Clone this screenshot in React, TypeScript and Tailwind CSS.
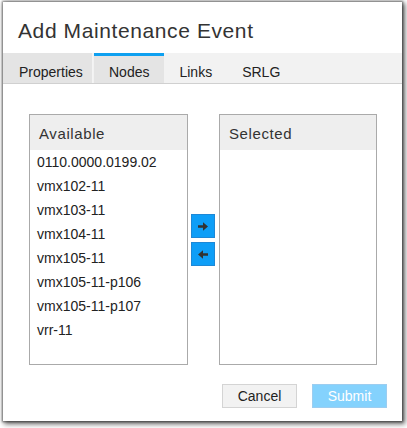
import React from "react";

const nodes = [
  "0110.0000.0199.02",
  "vmx102-11",
  "vmx103-11",
  "vmx104-11",
  "vmx105-11",
  "vmx105-11-p106",
  "vmx105-11-p107",
  "vrr-11",
];

const tabs = ["Properties", "Nodes", "Links", "SRLG"];

function ArrowRight() {
  return (
    <svg width="10" height="9" viewBox="0 0 10 9" fill="#333">
      <path d="M0 3.2h5V0.3L10 4.5 5 8.7V5.8H0z" />
    </svg>
  );
}

function ArrowLeft() {
  return (
    <svg width="10" height="9" viewBox="0 0 10 9" fill="#333">
      <path d="M10 3.2H5V0.3L0 4.5l5 4.2V5.8h5z" />
    </svg>
  );
}

export default function App() {
  return (
    <div className="w-[407px] h-[428px] bg-white pl-[3px] pt-[2px] font-[Liberation_Sans,Arial,sans-serif] text-[#222]">
      <div className="w-[399px] h-[419px] bg-white flex flex-col shadow-[0_0_2px_1px_rgba(0,0,0,0.45),2px_2px_5px_1px_rgba(0,0,0,0.6)]">
        {/* header */}
        <div className="h-[51px] pl-[15px] pt-[13px] text-[21px] tracking-[0.6px] text-[#333]">
          Add Maintenance Event
        </div>

        {/* tabs */}
        <div className="flex h-[31px] bg-[#f2f2f2] border-b border-[#d0d0d0]">
          {tabs.map((t) => {
            const active = t === "Nodes";
            const first = t === "Properties";
            return (
              <div
                key={t}
                className={
                  active
                    ? "px-[15px] pt-[6px] text-[14px] bg-[#e4e4e4] border-t-[3px] border-[#0ea0f0]"
                    : first
                    ? "w-[90px] pl-[16px] pt-[9px] text-[14px] bg-[#e4e4e4] border-r border-[#f4f4f4] mr-[1px]"
                    : "px-[15px] pt-[9px] text-[14px]"
                }
              >
                {t}
              </div>
            );
          })}
        </div>

        {/* body */}
        <div className="flex items-start pl-[26px] pt-[30px]">
          <div className="w-[159px] h-[251px] border border-[#aaa]">
            <div className="h-[35px] bg-[#eeeeee] pl-[9px] pt-[8px] text-[15px] tracking-[0.6px] text-[#333]">
              Available
            </div>
            <div className="pt-[2px]">
              {nodes.map((n) => (
                <div key={n} className="h-[24px] pl-[7px] text-[14px] leading-[20px] text-[#222]">
                  {n}
                </div>
              ))}
            </div>
          </div>

          <div className="flex flex-col gap-[4px] ml-[3px] mr-[4px] mt-[100px]">
            <button className="w-[24px] h-[24px] bg-[#0e9ef7] border border-[#1e88d6] flex items-center justify-center">
              <ArrowRight />
            </button>
            <button className="w-[24px] h-[24px] bg-[#0e9ef7] border border-[#1e88d6] flex items-center justify-center">
              <ArrowLeft />
            </button>
          </div>

          <div className="w-[158px] h-[251px] border border-[#aaa]">
            <div className="h-[35px] bg-[#eeeeee] pl-[9px] pt-[8px] text-[15px] tracking-[0.6px] text-[#333]">
              Selected
            </div>
          </div>
        </div>

        {/* footer */}
        <div className="flex justify-end gap-[15px] pr-[15px] mt-[19px]">
          <button className="w-[75px] h-[24px] bg-[#f2f2f2] border border-[#d4d4d4] text-[14px] text-[#222]">
            Cancel
          </button>
          <button className="w-[75px] h-[24px] bg-[#84d2fd] border border-[#9ccdf0] text-[14px] text-white">
            Submit
          </button>
        </div>
      </div>
    </div>
  );
}
